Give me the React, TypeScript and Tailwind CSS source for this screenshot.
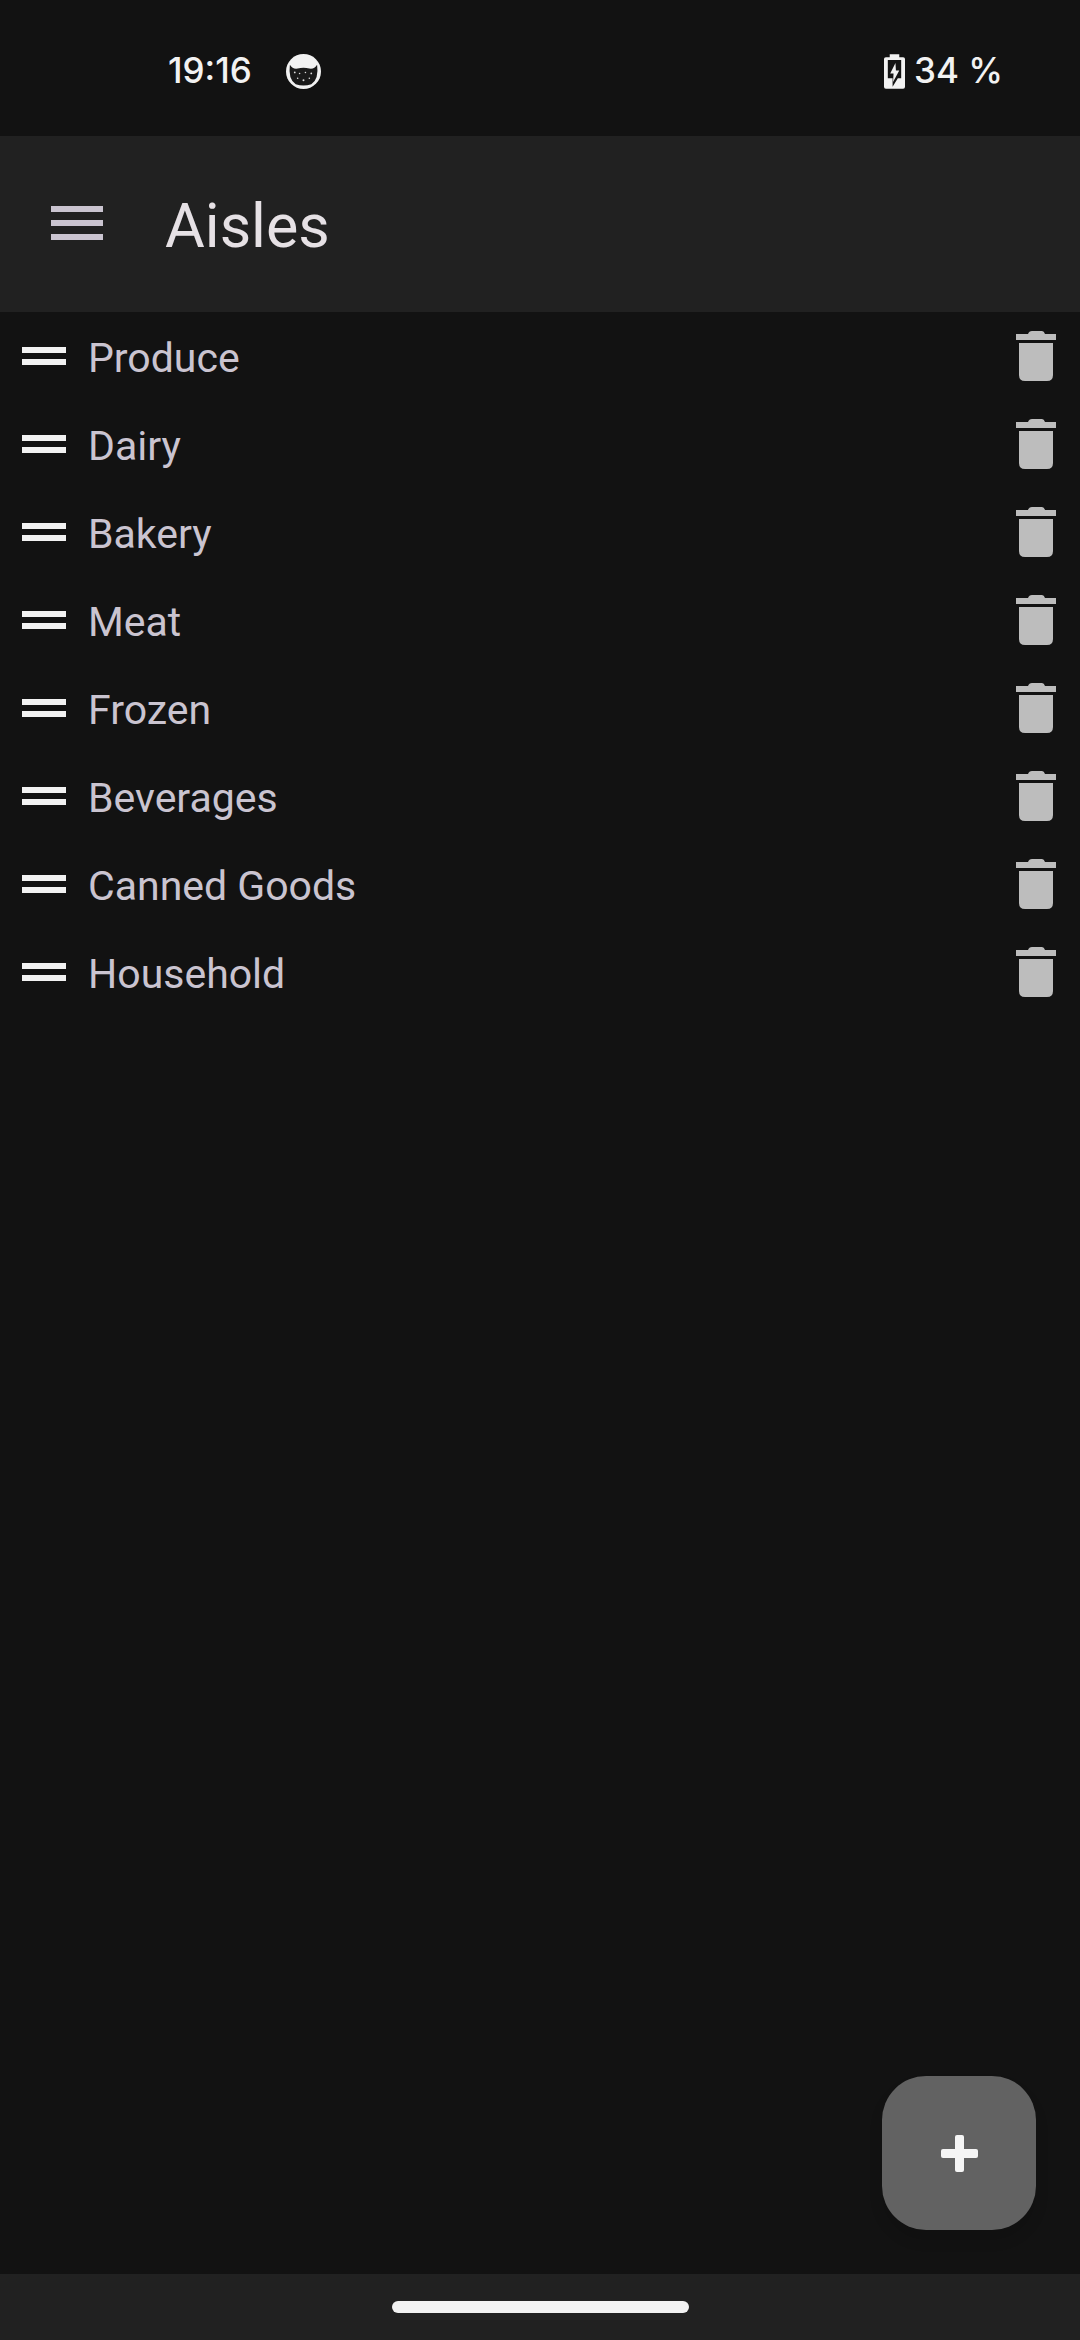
const aisles = ['Produce', 'Dairy', 'Bakery', 'Meat', 'Frozen', 'Beverages', 'Canned Goods', 'Household']

const CatIcon = () => (
  <svg width="35" height="35" viewBox="0 0 36 36">
    <circle cx="18" cy="18" r="18" fill="#f2f2f2" />
    <path d="M4 11 Q7 16 12 15 Q18 13.5 24 15 Q29 16 32 11 Q34 26 26 31 Q18 34 10 31 Q2 26 4 11 Z" fill="#1a1a1a" />
    <circle cx="9" cy="19" r="0.9" fill="#ddd" />
    <circle cx="14" cy="20" r="0.8" fill="#ddd" />
    <circle cx="20" cy="19" r="0.8" fill="#ddd" />
    <circle cx="26" cy="20" r="0.9" fill="#ddd" />
    <circle cx="12" cy="25" r="0.8" fill="#ddd" />
    <circle cx="18" cy="27" r="1" fill="#ddd" />
    <circle cx="24" cy="25" r="0.8" fill="#ddd" />
  </svg>
)

const BatteryIcon = () => (
  <svg width="21" height="35" viewBox="0 0 22 36">
    <path d="M6 0 H16 V3 H20 Q22 3 22 5 V34 Q22 36 20 36 H2 Q0 36 0 34 V5 Q0 3 2 3 H6 Z" fill="#f2f2f2" />
    <path d="M4 6 H18 V25 H14.5 L9 34 V25 H4 Z" fill="#141414" />
    <path d="M12 9 L6.5 20 H10 L9.5 29 L16 17 H12.5 Z" fill="#f2f2f2" />
  </svg>
)

const TrashIcon = () => (
  <svg width="40" height="50" viewBox="0 0 40 50">
    <path d="M12 3 Q13 0 16 0 H26 Q28 0 29 3 H40 V9 H0 V3 Z" fill="#bdbdbd" />
    <path d="M3 12 H37 V44 Q37 50 31 50 H9 Q3 50 3 44 Z" fill="#bdbdbd" />
  </svg>
)

export default function App() {
  return (
    <div className="relative flex h-[2340px] w-[1080px] flex-col overflow-hidden bg-[#121212] font-['Roboto',sans-serif]">
      {/* Status bar */}
      <div className="flex h-[136px] items-center justify-between bg-[#121212] pl-[168px] pr-[77px] pt-[6px] font-['Inter',sans-serif] text-[35px] font-medium text-[#f2f2f2]">
        <div className="flex items-center gap-[34px]">
          <span className="pb-[2px]">19:16</span>
          <CatIcon />
        </div>
        <div className="flex items-center gap-[9px]">
          <BatteryIcon />
          <span className="pb-[2px]">34 %</span>
        </div>
      </div>

      {/* App bar */}
      <div className="flex h-[176px] items-center bg-[#212121]">
        <div className="mb-[3px] ml-[51px] flex w-[52px] flex-col gap-[8px]">
          <div className="h-[6px] bg-[#cac4d0]" />
          <div className="h-[6px] bg-[#cac4d0]" />
          <div className="h-[6px] bg-[#cac4d0]" />
        </div>
        <h1 className="ml-[62px] pt-[6px] text-[61px] font-normal text-[#e6e1e5]">Aisles</h1>
      </div>

      {/* List */}
      <div className="flex flex-col">
        {aisles.map((name) => (
          <div key={name} className="flex h-[88px] items-center pl-[22px] pr-[24px]">
            <div className="flex w-[44px] flex-col gap-[6px]">
              <div className="h-[6px] bg-[#f2f2f2]" />
              <div className="h-[6px] bg-[#f2f2f2]" />
            </div>
            <span className="ml-[22px] flex-1 pt-[6px] text-[41px] text-[#cac4d0]">{name}</span>
            <TrashIcon />
          </div>
        ))}
      </div>

      {/* Add button */}
      <button className="absolute bottom-[110px] right-[44px] flex h-[154px] w-[154px] items-center justify-center rounded-[44px] bg-[#626262] shadow-[0_10px_14px_rgba(0,0,0,0.12)]">
        <svg width="37" height="37" viewBox="0 0 37 37">
          <rect x="14" y="0" width="9" height="37" rx="2" fill="#f5f5f5" />
          <rect x="0" y="14" width="37" height="9" rx="2" fill="#f5f5f5" />
        </svg>
      </button>

      {/* Nav bar */}
      <div className="mt-auto flex h-[66px] items-center justify-center bg-[#212121]">
        <div className="h-[12px] w-[297px] rounded-[6px] bg-[#f2f2f2]" />
      </div>
    </div>
  )
}
